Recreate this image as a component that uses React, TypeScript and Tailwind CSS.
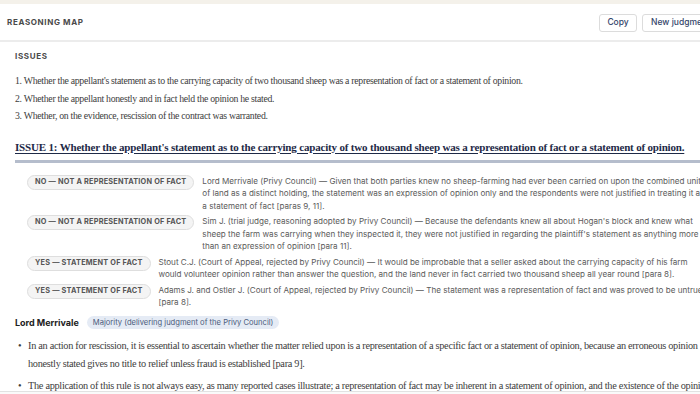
import React from "react";

const serif = { fontFamily: '"Liberation Serif", "Times New Roman", serif' };

const issues = [
  "1. Whether the appellant's statement as to the carrying capacity of two thousand sheep was a representation of fact or a statement of opinion.",
  "2. Whether the appellant honestly and in fact held the opinion he stated.",
  "3. Whether, on the evidence, rescission of the contract was warranted.",
];

const rows = [
  {
    badge: "NO — NOT A REPRESENTATION OF FACT",
    text: "Lord Merrivale (Privy Council) — Given that both parties knew no sheep-farming had ever been carried on upon the combined unit of land as a distinct holding, the statement was an expression of opinion only and the respondents were not justified in treating it as a statement of fact [paras 9, 11].",
  },
  {
    badge: "NO — NOT A REPRESENTATION OF FACT",
    text: "Sim J. (trial judge, reasoning adopted by Privy Council) — Because the defendants knew all about Hogan's block and knew what sheep the farm was carrying when they inspected it, they were not justified in regarding the plaintiff's statement as anything more than an expression of opinion [para 11].",
  },
  {
    badge: "YES — STATEMENT OF FACT",
    text: "Stout C.J. (Court of Appeal, rejected by Privy Council) — It would be improbable that a seller asked about the carrying capacity of his farm would volunteer opinion rather than answer the question, and the land never in fact carried two thousand sheep all year round [para 8].",
  },
  {
    badge: "YES — STATEMENT OF FACT",
    text: "Adams J. and Ostler J. (Court of Appeal, rejected by Privy Council) — The statement was a representation of fact and was proved to be untrue [para 8].",
  },
];

const bullets = [
  "In an action for rescission, it is essential to ascertain whether the matter relied upon is a representation of a specific fact or a statement of opinion, because an erroneous opinion honestly stated gives no title to relief unless fraud is established [para 9].",
  "The application of this rule is not always easy, as many reported cases illustrate; a representation of fact may be inherent in a statement of opinion, and the existence of the opinion may itself be a fact.",
];

export default function App() {
  return (
    <div
      className="w-[700px] h-[394px] overflow-hidden flex flex-col bg-white"
      style={{ fontFamily: 'Inter, "Liberation Sans", sans-serif' }}
    >
      <div className="h-[4px] shrink-0 bg-[#f4f1ea]" />
      <div className="flex-1 overflow-hidden">
        <div className="w-[726px]">
          <div className="h-[38px] flex items-center justify-between pl-[7px] pr-[7px] border-b-2 border-[#ececec]">
            <span className="text-[8px] font-bold tracking-[0.08em] text-[#4a4a4a]">REASONING MAP</span>
            <div className="flex gap-[5px] mt-[1px]">
              <button className="h-[18px] w-[38px] border border-[#dcdcdc] rounded-[3px] text-[8.5px] font-medium text-[#34456a] bg-white">
                Copy
              </button>
              <button className="h-[18px] px-[8px] border border-[#dcdcdc] rounded-[3px] text-[8.5px] font-medium text-[#34456a] bg-white">
                New judgment
              </button>
            </div>
          </div>

          <div className="px-[15px]">
            <div className="pt-[8px] text-[8px] font-bold tracking-[0.08em] text-[#4a4a4a] leading-[12px]">ISSUES</div>
            <div className="mt-[10px] flex flex-col text-[#3d3d3d] text-[9.8px] leading-[17.5px] tracking-[-0.3px]" style={serif}>
              {issues.map((t) => (
                <div key={t}>{t}</div>
              ))}
            </div>

            <div className="mt-[13px] pb-[4px] border-b-[3px] border-[#b5bdcc]">
              <h2
                className="text-[11px] font-bold leading-[18px] text-[#1e2a47] underline underline-offset-2 decoration-[1px] tracking-[-0.18px] whitespace-nowrap"
                style={serif}
              >
                ISSUE 1: Whether the appellant's statement as to the carrying capacity of two thousand sheep was a representation of fact or a statement of opinion.
              </h2>
            </div>

            <div className="mt-[12px] pl-[12px] flex flex-col gap-[3px]">
              {rows.map((r, i) => (
                <div key={i} className="flex items-start gap-[8px]">
                  <span className="shrink-0 h-[15px] px-[7px] flex items-center rounded-full border border-[#dedede] bg-[#f4f4f4] text-[7.3px] font-bold tracking-[0.03em] text-[#555]">
                    {r.badge}
                  </span>
                  <p className="flex-1 text-[8.1px] leading-[12.5px] text-[#5a5a5a]">{r.text}</p>
                </div>
              ))}
            </div>

            <div className="mt-[7px] flex items-center gap-[8px]">
              <span className="text-[9px] font-bold text-[#222]">Lord Merrivale</span>
              <span className="h-[13px] px-[6px] flex items-center rounded-full bg-[#e5ebf5] text-[7.6px] text-[#4b5b7b]">
                Majority (delivering judgment of the Privy Council)
              </span>
            </div>

            <ul className="mt-[8px] flex flex-col gap-[5px] text-[#3d3d3d] text-[10.3px] leading-[17.5px] tracking-[-0.3px]" style={serif}>
              {bullets.map((b) => (
                <li key={b} className="flex">
                  <span className="w-[13px] pl-[3px] shrink-0">•</span>
                  <span className="flex-1">{b}</span>
                </li>
              ))}
            </ul>
          </div>
        </div>
      </div>
      <div className="h-[3px] shrink-0 border-t border-[#e2e2e2] bg-[#fafafa]" />
    </div>
  );
}
